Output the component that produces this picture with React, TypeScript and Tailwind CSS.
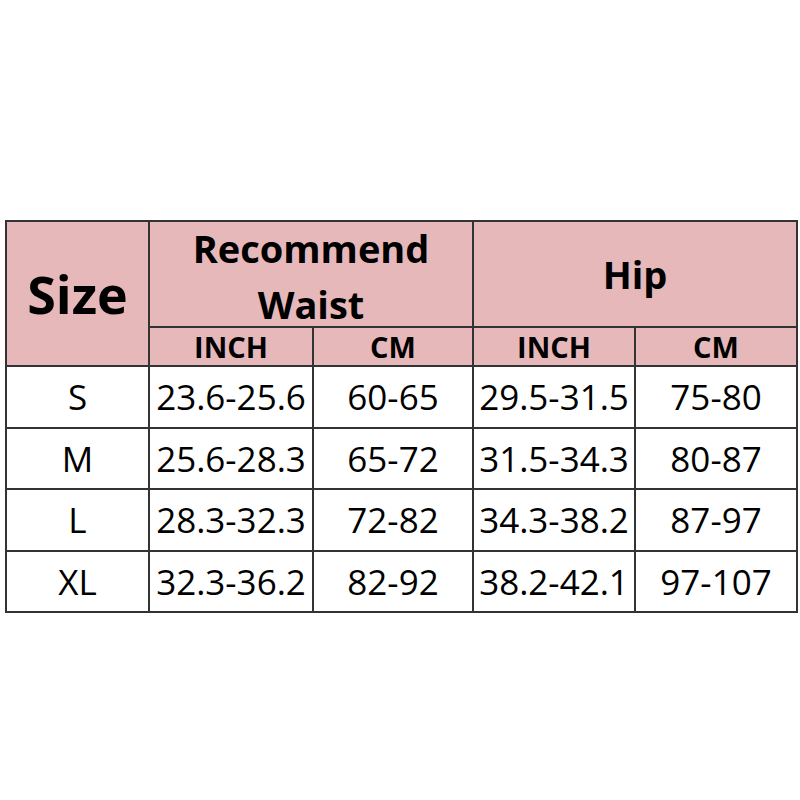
const rows = [
  ["S", "23.6-25.6", "60-65", "29.5-31.5", "75-80"],
  ["M", "25.6-28.3", "65-72", "31.5-34.3", "80-87"],
  ["L", "28.3-32.3", "72-82", "34.3-38.2", "87-97"],
  ["XL", "32.3-36.2", "82-92", "38.2-42.1", "97-107"],
];

export default function App() {
  const cell = "border-2 border-[#333333] text-center p-0";
  return (
    <div className="w-[800px] h-[800px] bg-white pt-[220px] pl-[5px] font-['Open_Sans',sans-serif] text-black">
      <table className="table-fixed border-collapse w-[791px]">
        <colgroup>
          <col className="w-[143px]" />
          <col className="w-[164px]" />
          <col className="w-[160px]" />
          <col className="w-[162px]" />
          <col className="w-[162px]" />
        </colgroup>
        <thead>
          <tr className="h-[106px] bg-[#e7b8ba]">
            <th rowSpan={2} className={`${cell} text-[52px] font-bold leading-none`}>
              Size
            </th>
            <th colSpan={2} className={`${cell} text-[38px] font-bold leading-[56px]`}>
              <div className="-mt-[3px]">Recommend</div>
              <div className="-mb-[6px]">Waist</div>
            </th>
            <th colSpan={2} className={`${cell} text-[38px] font-bold leading-none`}>
              Hip
            </th>
          </tr>
          <tr className="h-[39px] bg-[#e7b8ba] text-[29px] font-bold leading-none">
            <th className={cell}>INCH</th>
            <th className={cell}>CM</th>
            <th className={cell}>INCH</th>
            <th className={cell}>CM</th>
          </tr>
        </thead>
        <tbody>
          {rows.map((r) => (
            <tr key={r[0]} className="h-[61.5px] text-[35px] leading-none">
              {r.map((v, i) => (
                <td key={i} className={cell}>
                  {v}
                </td>
              ))}
            </tr>
          ))}
        </tbody>
      </table>
    </div>
  );
}
